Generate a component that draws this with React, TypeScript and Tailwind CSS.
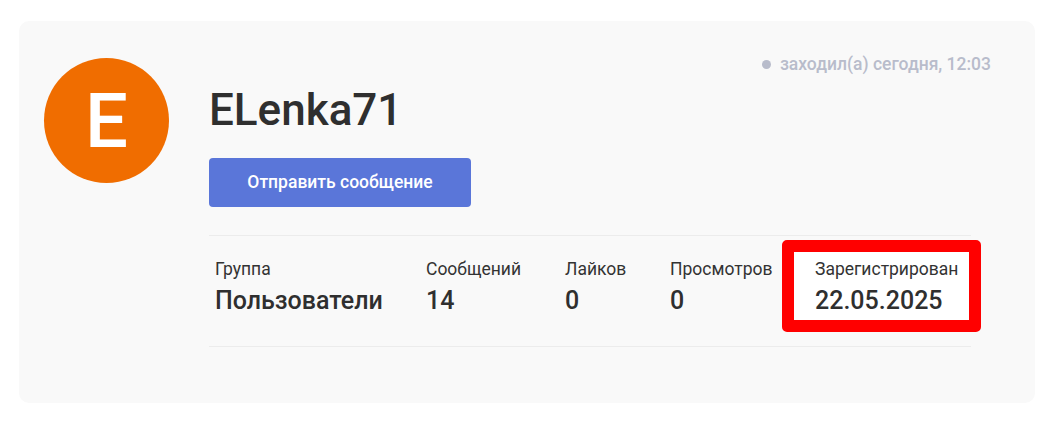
import React from "react";

const stats = [
  { label: "Группа", value: "Пользователи", w: "w-[211px]" },
  { label: "Сообщений", value: "14", w: "w-[139px]" },
  { label: "Лайков", value: "0", w: "w-[105px]" },
  { label: "Просмотров", value: "0", w: "w-[112px]" },
];

export default function App() {
  return (
    <div
      className="min-h-[428px] w-[1055px] bg-white pt-[21px] pl-[19px]"
      style={{ fontFamily: "Roboto, 'Liberation Sans', sans-serif" }}
    >
      <div className="flex h-[382px] w-[1016px] rounded-[10px] bg-[#f9f9f9] pt-[31px] pl-[25px] pr-[64px] pb-[56px]">
        <div className="mt-[6px] flex h-[125px] w-[125px] shrink-0 items-center justify-center rounded-full bg-[#f06d00]">
          <span className="text-[76px] leading-none font-medium text-white">E</span>
        </div>
        <div className="ml-[40px] flex min-w-0 flex-1 flex-col">
          <div className="-mr-[20px] flex h-[24px] items-center justify-end gap-[9px] text-[17.5px] leading-[24px] font-medium text-[#b8bccb]">
            <span className="h-[9px] w-[9px] rounded-full bg-[#b8bccb]" />
            <span>заходил(а) сегодня, 12:03</span>
          </div>
          <div className="mt-[8px] text-[44px] leading-[52px] font-medium text-[#2f2f2f]">
            ELenka71
          </div>
          <button className="mt-[22px] flex h-[50px] w-[262px] items-center justify-center rounded-[4px] bg-[#5a76d9] text-[17.5px] font-medium text-white">
            Отправить сообщение
          </button>
          <div className="mt-[28px] flex items-start border-t border-b border-[#ececec] pt-[21px] pb-[29px] pl-[6px]">
            {stats.map((s) => (
              <div key={s.label} className={`${s.w} shrink-0`}>
                <div className="text-[17.5px] leading-[24px] text-[#333]">{s.label}</div>
                <div className="mt-[4px] text-[25px] leading-[32px] font-medium text-[#2f2f2f]">
                  {s.value}
                </div>
              </div>
            ))}
            <div className="-mt-[17px] -mb-[16px] -mr-[20px] w-[199px] shrink-0 rounded-[5px] border-[12px] border-[#ff0000] bg-white pt-[5px] pb-[3px] pl-[21px]">
              <div className="text-[17.5px] leading-[24px] text-[#333]">Зарегистрирован</div>
              <div className="mt-[4px] text-[25px] leading-[32px] font-medium text-[#2f2f2f]">
                22.05.2025
              </div>
            </div>
          </div>
        </div>
      </div>
    </div>
  );
}
